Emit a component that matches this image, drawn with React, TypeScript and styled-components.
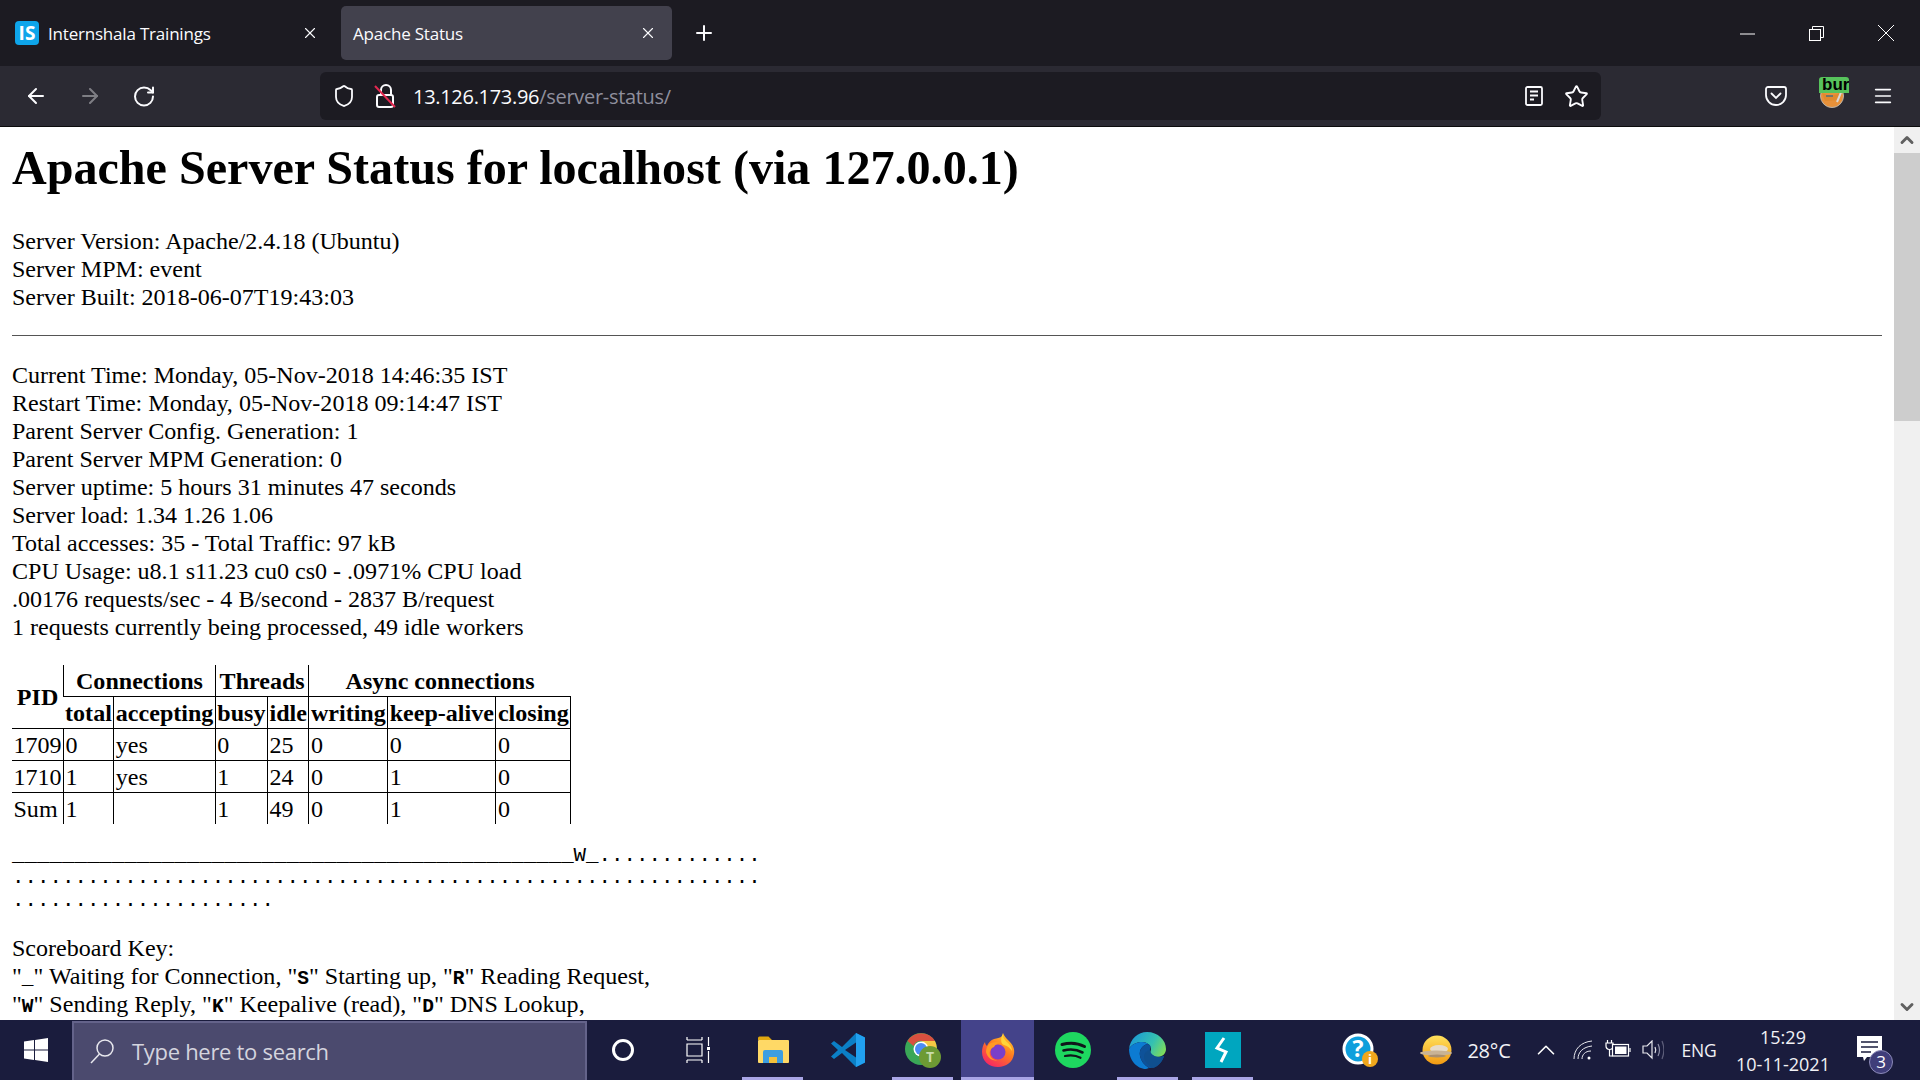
import React from "react";
import styled, { createGlobalStyle } from "styled-components";
import { ArrowLeft, ArrowRight, ChevronUp, ChevronDown, Menu, Plus, RotateCw, Shield, Star, X } from "lucide-react";

const GlobalStyle = createGlobalStyle`
  html, body {
    margin: 0;
    padding: 0;
    background: #fff;
  }
  #root {
    height: 100vh;
  }
`;

const Screen = styled.div`
  display: flex;
  flex-direction: column;
  width: 1920px;
  height: 1080px;
  overflow: hidden;
`;

/* browser chrome */
const TitleBar = styled.div`
  display: flex;
  align-items: center;
  flex: 0 0 66px;
  background: #1c1b22;
  color: #fbfbfe;
  font-family: "Open Sans", sans-serif;
`;

const Tab = styled.div<{ $active?: boolean }>`
  display: flex;
  align-items: center;
  gap: 9px;
  width: 331px;
  height: 54px;
  margin-left: ${(p) => (p.$active ? "10px" : "0")};
  padding: 0 ${(p) => (p.$active ? "15px" : "12px")} 0 ${(p) => (p.$active ? "12px" : "15px")};
  box-sizing: border-box;
  border-radius: 5px;
  background: ${(p) => (p.$active ? "#42414d" : "transparent")};
  font-size: 17px;
  letter-spacing: -0.2px;
`;

const TabLabel = styled.span`
  flex: 1;
`;

const SiteIcon = styled.div`
  display: flex;
  align-items: center;
  justify-content: center;
  width: 24px;
  height: 24px;
  border-radius: 4px;
  background: #0ea5ea;
  color: #fff;
  font-size: 19px;
  font-weight: 700;
  letter-spacing: 0;
`;

const NewTab = styled.div`
  display: flex;
  margin-left: 20px;
`;

const WindowButtons = styled.div`
  display: flex;
  align-items: center;
  margin-left: auto;
`;

const WindowButton = styled.div`
  display: flex;
  justify-content: center;
  width: 69px;
`;

const ToolBar = styled.div`
  display: flex;
  align-items: center;
  flex: 0 0 61px;
  padding-left: 24px;
  box-sizing: border-box;
  background: #2b2a33;
  border-bottom: 1px solid #0c0c0d;
  color: #fbfbfe;
`;

const NavButton = styled.div<{ $dim?: boolean }>`
  display: flex;
  justify-content: center;
  width: 24px;
  margin-right: 30px;
  opacity: ${(p) => (p.$dim ? 0.4 : 1)};
`;

const UrlBar = styled.div`
  display: flex;
  align-items: center;
  width: 1281px;
  height: 48px;
  margin-left: 134px;
  padding: 0 11px 0 12px;
  box-sizing: border-box;
  border-radius: 6px;
  background: #1c1b22;
`;

const UrlIcon = styled.div<{ $width: number }>`
  display: flex;
  flex: 0 0 ${(p) => p.$width}px;
`;

const UrlText = styled.div`
  flex: 1;
  padding-top: 1px;
  font-family: "Open Sans", sans-serif;
  font-size: 20px;
  letter-spacing: -0.3px;
  color: #fbfbfe;
`;

const UrlPath = styled.span`
  color: #8f8f9d;
`;

const ToolIcons = styled.div`
  display: flex;
  align-items: center;
  margin-left: 159px;
`;

const ToolSlot = styled.div<{ $width: number }>`
  position: relative;
  display: flex;
  justify-content: center;
  width: ${(p) => p.$width}px;
`;

const BurpBadge = styled.div`
  position: absolute;
  top: -6px;
  left: 27px;
  width: 30px;
  height: 16px;
  overflow: hidden;
  border-radius: 3px 3px 0 0;
  background: #57c35c;
  color: #000;
  font-family: "Liberation Sans", sans-serif;
  font-size: 17px;
  font-weight: 700;
  line-height: 15px;
  padding-left: 3px;
  box-sizing: border-box;
  white-space: nowrap;
`;

/* page */
const Viewport = styled.div`
  display: flex;
  flex: 1;
  min-height: 0;
  background: #fff;
`;

const Document = styled.main`
  flex: 1;
  min-width: 0;
  padding: 0 12px;
  overflow: hidden;
  color: #000;
  font-family: "Liberation Serif", "Times New Roman", serif;
  font-size: 24.05px;
  line-height: 28px;
`;

const Heading = styled.h1`
  margin: 14px 0 32px;
  font-size: 48.1px;
  line-height: 54px;
  font-weight: 700;
`;

const Line = styled.div`
  white-space: nowrap;
`;

const Rule = styled.hr`
  margin: 24px 0 25px;
  height: 1px;
  border: 0;
  background: #555;
`;

const StatusTable = styled.table`
  margin: 24px 0 21px;
  border-collapse: collapse;
  line-height: 28px;

  th, td {
    padding: 1.5px;
    height: 28px;
    border-left: 1px solid #000;
    border-bottom: 1px solid #000;
    text-align: left;
  }

  th {
    font-weight: 700;
  }

  th[colspan] {
    text-align: center;
    border-bottom: 1px solid #000;
  }

  tr > :first-child {
    border-left: 0;
  }

  tr:last-child td {
    border-bottom: 0;
  }

  tr > :last-child:not([colspan]) {
    border-right: 1px solid #000;
  }
`;

const PidHead = styled.th`
  && {
    text-align: center;
    border-left: 0;
  }
`;

const Scoreboard = styled.pre`
  margin: 0 0 22px;
  font-family: "Liberation Mono", "Courier New", monospace;
  font-size: 20.8px;
  line-height: 22.3px;
`;

const Code = styled.code`
  font-family: "Liberation Mono", "Courier New", monospace;
  font-size: 19.5px;
  font-weight: 700;
  line-height: 0;
`;

const ScrollBar = styled.div`
  display: flex;
  flex-direction: column;
  flex: 0 0 26px;
  background: #f0f0f0;
  color: #606060;
`;

const ScrollButton = styled.div`
  display: flex;
  align-items: center;
  justify-content: center;
  flex: 0 0 26px;
`;

const ScrollThumb = styled.div`
  flex: 0 0 268px;
  background: #cdcdcd;
`;

const ScrollTrack = styled.div`
  flex: 1;
`;

/* windows taskbar */
const TaskBar = styled.footer`
  display: flex;
  align-items: center;
  flex: 0 0 60px;
  background: #1a1c3d;
  color: #fff;
  font-family: "Open Sans", sans-serif;
`;

const StartButton = styled.div`
  display: flex;
  align-items: center;
  justify-content: center;
  flex: 0 0 72px;
`;

const SearchBox = styled.div`
  display: flex;
  align-items: center;
  gap: 17px;
  flex: 0 0 515px;
  height: 59px;
  margin: 1px -2px 0 0;
  padding: 0 0 2px 15px;
  box-sizing: border-box;
  background: #4b4a6e;
  border: 2px solid #64638a;
  border-bottom: 0;
  color: #d4d4de;
  font-size: 22px;
  letter-spacing: -0.3px;
`;

const TaskSlot = styled.div<{ $open?: boolean; $active?: boolean }>`
  display: flex;
  align-items: center;
  justify-content: center;
  flex: 0 0 75px;
  height: 60px;
  box-sizing: border-box;
  position: relative;
  background: ${(p) => (p.$active ? "#44438a" : "transparent")};
  background-clip: content-box;
  padding: 0 ${(p) => (p.$active ? "1px" : "0")};

  &::after {
    content: "";
    display: ${(p) => (p.$open ? "block" : "none")};
    position: absolute;
    left: ${(p) => (p.$active ? "1px" : "7px")};
    right: ${(p) => (p.$active ? "1px" : "7px")};
    bottom: 0;
    height: 3px;
    background: #a9a5e6;
  }
`;

const Tray = styled.div`
  display: flex;
  align-items: center;
  margin-left: 41px;
`;

const TraySlot = styled.div<{ $width: number }>`
  position: relative;
  display: flex;
  align-items: center;
  justify-content: center;
  flex: 0 0 ${(p) => p.$width}px;
`;

const TrayText = styled.span<{ $size: number }>`
  font-size: ${(p) => p.$size}px;
  letter-spacing: -0.2px;
  color: #f2f2f6;
`;

const Clock = styled.div`
  display: flex;
  flex-direction: column;
  align-items: center;
  gap: 5px;
  font-size: 18px;
  line-height: 22px;
  color: #f2f2f6;
`;

const NotifyBadge = styled.div`
  position: absolute;
  left: 34px;
  top: 14px;
  width: 24px;
  height: 24px;
  border-radius: 50%;
  background: #3f3d7a;
  border: 1px solid #8c8ab8;
  box-sizing: border-box;
  text-align: center;
  font-size: 17px;
  line-height: 22px;
`;

const BurpFace = () => (
  <svg width="24" height="26" viewBox="0 0 24 26">
    <circle cx="12" cy="13" r="11.500" fill="#e8913a" stroke="#b9b4ad" />
    <path d="M2 10l8 3 8-2 4-5-3 11-14 1z" fill="#e08a2e" />
    <path d="M17 19l5-12" stroke="#d8d8d8" strokeWidth="2" />
    <path d="M6 13h7" stroke="#4b6e80" strokeWidth="1.500" />
  </svg>
);

const FolderIcon = () => (
  <svg width="32" height="28" viewBox="0 0 32 28">
    <path d="M1 2a1.500 1.500 0 0 1 1.500-1.500h9L15 4h-14z" fill="#e0a70f" />
    <rect x="1" y="4" width="31" height="23" rx="1" fill="#ffd966" />
    <path d="M6 27v-11a2 2 0 0 1 2-2h16a2 2 0 0 1 2 2v11h-6v-6h-8v6z" fill="#3d9ee0" />
    <rect x="12" y="21" width="8" height="6" fill="#f4c13c" />
  </svg>
);

const VsCodeIcon = () => (
  <svg width="36" height="36" viewBox="0 0 36 36">
    <path d="M26 1l9 4.500v25L26 35 12 21l-8 6-3-2.500L8 18 1 11.500 4 9l8 6z" fill="#0b7fc6" />
    <path d="M26 1l9 4.500v25L26 35V25l-1 0V11l1 0z" fill="#21a0ef" />
    <path d="M26 10.500L15 18l11 7.500z" fill="#1a1c3d" />
  </svg>
);

const ChromeIcon = () => (
  <svg width="38" height="36" viewBox="0 0 38 36">
    <circle cx="17" cy="17" r="16" fill="#3aa757" />
    <path d="M3.500 9A16 16 0 0 1 31 9H17a8 8 0 0 0-7.500 5z" fill="#d9503f" />
    <path d="M31 9a16 16 0 0 1-8 22l-1-12a8 8 0 0 0-5-10z" fill="#f5c744" />
    <circle cx="17" cy="17" r="7.500" fill="#fff" />
    <circle cx="17" cy="17" r="6" fill="#4c8bf5" />
    <circle cx="26" cy="25" r="11" fill="#6d9a34" />
    <text x="26" y="30" textAnchor="middle" fontSize="14" fontWeight="700" fontFamily="Open Sans, sans-serif" fill="#c9dcae">T</text>
  </svg>
);

const FirefoxIcon = () => (
  <svg width="34" height="36" viewBox="0 0 34 36">
    <defs>
      <linearGradient id="ffOuter" x1="0.8" y1="0" x2="0.2" y2="1">
        <stop offset="0" stopColor="#ffd02e" />
        <stop offset="0.45" stopColor="#ff7a1f" />
        <stop offset="1" stopColor="#f5206a" />
      </linearGradient>
    </defs>
    <path d="M22 1c1 3 3 5 6 8 4 4 6 8 5 13-1 8-8 13-16 13C8 35 1 29 1 20c0-4 1-7 3-10 0 2 1 3 2 4 1-3 4-6 7-7 3-1 6-1 7-2 1-1 2-2 2-4z" fill="url(#ffOuter)" />
    <path d="M22 1c-1 5 3 8 6 11 2 2 3 5 3 7-2-3-4-5-8-6-3-1-4-5-1-12z" fill="#ffd43a" />
    <circle cx="17" cy="20" r="7.500" fill="#7a3fc8" />
    <path d="M8 12c3-2 8-3 12-1-4 0-6 2-7 4-3 1-5 4-4 8 1 3 4 6 9 5-7 2-12-3-13-8 0-3 1-6 3-8z" fill="#ff9a24" />
  </svg>
);

const SpotifyIcon = () => (
  <svg width="36" height="36" viewBox="0 0 36 36">
    <circle cx="18" cy="18" r="18" fill="#1ed760" />
    <path d="M7 12.500c7-2 16-1.500 22.500 2" stroke="#10151a" strokeWidth="3" strokeLinecap="round" fill="none" />
    <path d="M8.500 18.500c6-1.500 13.500-1 19 2" stroke="#10151a" strokeWidth="2.600" strokeLinecap="round" fill="none" />
    <path d="M10 24c5-1 11-.7 15.500 1.800" stroke="#10151a" strokeWidth="2.200" strokeLinecap="round" fill="none" />
  </svg>
);

const EdgeIcon = () => (
  <svg width="37" height="37" viewBox="0 0 37 37">
    <defs>
      <linearGradient id="edgeTop" x1="0" y1="0.3" x2="1" y2="0.7">
        <stop offset="0" stopColor="#1b9ad6" />
        <stop offset="0.6" stopColor="#35c1b0" />
        <stop offset="1" stopColor="#7fdc5a" />
      </linearGradient>
    </defs>
    <path d="M0 17C1 7 9 0 18 0c11 0 19 8 19 17 0 5-4 8-9 8-4 0-7-2-7-4 0-1 1-2 1-4 0-4-4-7-9-7-6 0-11 3-13 7z" fill="url(#edgeTop)" />
    <path d="M0 17c3-5 8-7 13-7 3 0 5 1 6 2-6 1-9 6-8 12 1 5 4 9 9 12-1 0-2 1-3 1C8 37 0 28 0 17z" fill="#0c7bd2" />
    <path d="M19 12c3 1 3 3 2 5-1 3 3 8 9 8 2 0 3-1 5-1-2 7-8 13-15 12-5-3-8-7-9-12-1-6 2-11 8-12z" fill="#0e5299" />
    <path d="M21 18c0 4 4 7 9 7 2 0 4 0 5-1-2 6-6 10-11 12l-2-1c-4-3-7-7-7-10 0-4 3-7 6-7z" fill="#0f4f8f" />
  </svg>
);

const BoltIcon = () => (
  <svg width="36" height="36" viewBox="0 0 36 36">
    <rect width="36" height="36" fill="#00a6bf" />
    <path d="M19 6l-7 10 9 4-5 10" stroke="#fff" strokeWidth="3" strokeLinejoin="miter" fill="none" />
  </svg>
);

const HelpIcon = () => (
  <svg width="36" height="40" viewBox="0 -3 36 40">
    <circle cx="16" cy="16" r="14" fill="#0f9fdc" stroke="#fff" strokeWidth="3" />
    <text x="16" y="24" textAnchor="middle" fontSize="23" fontWeight="700" fontFamily="Open Sans, sans-serif" fill="#fff">?</text>
    <circle cx="28" cy="26" r="8" fill="#f0a71c" />
    <text x="28" y="31" textAnchor="middle" fontSize="13" fontWeight="700" fontFamily="Open Sans, sans-serif" fill="#fff">i</text>
  </svg>
);

const WeatherIcon = () => (
  <svg width="36" height="30" viewBox="0 0 36 30">
    <defs>
      <linearGradient id="sun" x1="0" y1="0" x2="0" y2="1">
        <stop offset="0" stopColor="#ffe15c" />
        <stop offset="1" stopColor="#f39a12" />
      </linearGradient>
    </defs>
    <circle cx="18" cy="15" r="14.500" fill="url(#sun)" />
    <ellipse cx="20" cy="14" rx="9" ry="4" fill="#e8dcc8" />
    <ellipse cx="17" cy="18" rx="16" ry="2.500" fill="#c9b395" />
    <ellipse cx="18" cy="21" rx="9" ry="1.500" fill="#a98f70" />
  </svg>
);

const WifiIcon = () => (
  <svg width="20" height="20" viewBox="0 0 20 20" fill="none" stroke="#e8e8ee" strokeWidth="1">
    <path d="M1 19C1 9 8 2 19 1" />
    <path d="M5 19c0-7 5-12 14-13" />
    <path d="M9 19c0-4 3-8 9-8" />
    <circle cx="16" cy="18" r="1.500" fill="#fff" stroke="none" />
  </svg>
);

const BatteryIcon = () => (
  <svg width="26" height="20" viewBox="0 0 26 20" fill="none" stroke="#fff" strokeWidth="1.200">
    <path d="M2.500 0v3M6.500 0v3M1 3h7v3a3.500 3.500 0 0 1-7 0zM4.500 10v6h3" />
    <rect x="7.500" y="4.500" width="16" height="11.500" fill="#1a1c3d" />
    <rect x="10" y="6.500" width="11.500" height="7.500" fill="#fff" stroke="none" />
    <path d="M25 8v4" />
  </svg>
);

const SpeakerIcon = () => (
  <svg width="22" height="20" viewBox="0 0 22 20" fill="none" stroke="#e8e8ee" strokeWidth="1.200">
    <path d="M1 6v7h4l5 5V1L5 6z" />
    <path d="M13 7c1 2 1 4 0 6" />
    <path d="M16 4c2 4 2 8 0 12" stroke="#8f90a8" />
    <path d="M20 1c2.500 6 2.500 12 0 18" stroke="#5d5e7a" />
  </svg>
);

const LockIcon = () => (
  <svg width="22" height="26" viewBox="0 0 22 26" fill="none">
    <path d="M7 12V7a5 5 0 0 1 10 0v5" stroke="#fbfbfe" strokeWidth="2" />
    <rect x="3" y="12" width="16" height="12" rx="2" stroke="#fbfbfe" strokeWidth="2" fill="#1c1b22" />
    <path d="M1 3l20 21" stroke="#e22850" strokeWidth="2" />
  </svg>
);

const ReaderIcon = () => (
  <svg width="18" height="20" viewBox="0 0 18 20" fill="none" stroke="#fbfbfe" strokeWidth="1.800">
    <rect x="1" y="1" width="16" height="18" rx="1.500" />
    <path d="M5 5.500h8M5 9.500h8M5 13.500h4" />
  </svg>
);

const PocketIcon = () => (
  <svg width="22" height="20" viewBox="0 0 22 20" fill="none" stroke="#fbfbfe" strokeWidth="1.800">
    <path d="M1 3a2 2 0 0 1 2-2h16a2 2 0 0 1 2 2v6a10 10 0 0 1-20 0z" />
    <path d="M6.500 7.500L11 12l4.500-4.500" strokeLinecap="round" />
  </svg>
);

const RestoreIcon = () => (
  <svg width="15" height="15" viewBox="0 0 15 15" fill="none" stroke="#fff" strokeWidth="1">
    <rect x="0.500" y="3.500" width="11" height="11" />
    <path d="M3.500 3.500v-3h11v11h-3" />
  </svg>
);

const MinimizeIcon = () => (
  <svg width="15" height="15" viewBox="0 0 15 15" stroke="#fff" strokeWidth="1">
    <path d="M0 8h15" />
  </svg>
);

const CloseIcon = () => (
  <svg width="16" height="16" viewBox="0 0 16 16" stroke="#fff" strokeWidth="1">
    <path d="M0 0l16 16M16 0L0 16" />
  </svg>
);

const WindowsIcon = () => (
  <svg width="24" height="24" viewBox="0 0 24 24" fill="#fff">
    <path d="M0 3.500l10-1.400v9.400H0zM11 2l13-2v11.500H11zM0 12.500h10v9.400L0 20.500zM11 12.500h13V24l-13-2z" />
  </svg>
);

const SearchIcon = () => (
  <svg width="26" height="26" viewBox="0 0 26 26" fill="none" stroke="#e8e8ee" strokeWidth="1.500">
    <circle cx="16" cy="10" r="8" />
    <path d="M10.500 16L2 25" />
  </svg>
);

const CortanaIcon = () => (
  <svg width="24" height="24" viewBox="0 0 24 24" fill="none" stroke="#fff" strokeWidth="3">
    <circle cx="12" cy="12" r="9.500" />
  </svg>
);

const TaskViewIcon = () => (
  <svg width="24" height="26" viewBox="0 0 24 26" fill="none" stroke="#fff" strokeWidth="1.200">
    <path d="M1 3h15M1 3V0M16 3V0M1 7h15v12H1zM1 23h15M1 23v3M16 23v3M22.500 0v9M22.500 14v12" />
    <rect x="21" y="10" width="3" height="3" fill="#fff" stroke="none" />
  </svg>
);

const NotifyIcon = () => (
  <svg width="26" height="28" viewBox="0 0 26 28">
    <path d="M0 0h25v21H10l-3 4-1-4H0z" fill="#fff" />
    <path d="M4 6h17M4 11h17M4 16h10" stroke="#1a1c3d" strokeWidth="1.400" />
  </svg>
);

const rows = [
  ["1709", "0", "yes", "0", "25", "0", "0", "0"],
  ["1710", "1", "yes", "1", "24", "0", "1", "0"],
  ["Sum", "1", "", "1", "49", "0", "1", "0"],
];

const scoreboard = [
  "_".repeat(45) + "W_" + ".".repeat(13),
  ".".repeat(60),
  ".".repeat(21),
].join("\n");

export default function App() {
  return (
    <Screen>
      <GlobalStyle />
      <TitleBar>
        <Tab>
          <SiteIcon>IS</SiteIcon>
          <TabLabel>Internshala Trainings</TabLabel>
          <X size={18} strokeWidth={1.5} />
        </Tab>
        <Tab $active>
          <TabLabel>Apache Status</TabLabel>
          <X size={18} strokeWidth={1.5} />
        </Tab>
        <NewTab>
          <Plus size={24} strokeWidth={2} />
        </NewTab>
        <WindowButtons>
          <WindowButton><MinimizeIcon /></WindowButton>
          <WindowButton><RestoreIcon /></WindowButton>
          <WindowButton><CloseIcon /></WindowButton>
        </WindowButtons>
      </TitleBar>

      <ToolBar>
        <NavButton><ArrowLeft size={26} strokeWidth={2} /></NavButton>
        <NavButton $dim><ArrowRight size={26} strokeWidth={2} /></NavButton>
        <NavButton><RotateCw size={25} strokeWidth={2} /></NavButton>
        <UrlBar>
          <UrlIcon $width={42}><Shield size={24} strokeWidth={1.8} /></UrlIcon>
          <UrlIcon $width={39}><LockIcon /></UrlIcon>
          <UrlText>13.126.173.96<UrlPath>/server-status/</UrlPath></UrlText>
          <UrlIcon $width={39}><ReaderIcon /></UrlIcon>
          <UrlIcon $width={26}><Star size={25} strokeWidth={1.8} /></UrlIcon>
        </UrlBar>
        <ToolIcons>
          <ToolSlot $width={32}><PocketIcon /></ToolSlot>
          <ToolSlot $width={80}>
            <BurpFace />
            <BurpBadge>burp</BurpBadge>
          </ToolSlot>
          <ToolSlot $width={22}><Menu size={24} strokeWidth={1.8} /></ToolSlot>
        </ToolIcons>
      </ToolBar>

      <Viewport>
        <Document>
          <Heading>Apache Server Status for localhost (via 127.0.0.1)</Heading>
          <Line>Server Version: Apache/2.4.18 (Ubuntu)</Line>
          <Line>Server MPM: event</Line>
          <Line>Server Built: 2018-06-07T19:43:03</Line>
          <Rule />
          <Line>Current Time: Monday, 05-Nov-2018 14:46:35 IST</Line>
          <Line>Restart Time: Monday, 05-Nov-2018 09:14:47 IST</Line>
          <Line>Parent Server Config. Generation: 1</Line>
          <Line>Parent Server MPM Generation: 0</Line>
          <Line>Server uptime: 5 hours 31 minutes 47 seconds</Line>
          <Line>Server load: 1.34 1.26 1.06</Line>
          <Line>Total accesses: 35 - Total Traffic: 97 kB</Line>
          <Line>CPU Usage: u8.1 s11.23 cu0 cs0 - .0971% CPU load</Line>
          <Line>.00176 requests/sec - 4 B/second - 2837 B/request</Line>
          <Line>1 requests currently being processed, 49 idle workers</Line>
          <StatusTable>
            <thead>
              <tr>
                <PidHead rowSpan={2}>PID</PidHead>
                <th colSpan={2}>Connections</th>
                <th colSpan={2}>Threads</th>
                <th colSpan={3}>Async connections</th>
              </tr>
              <tr>
                <th>total</th>
                <th>accepting</th>
                <th>busy</th>
                <th>idle</th>
                <th>writing</th>
                <th>keep-alive</th>
                <th>closing</th>
              </tr>
            </thead>
            <tbody>
              {rows.map((row) => (
                <tr key={row[0]}>
                  {row.map((cell, i) => (
                    <td key={i}>{cell}</td>
                  ))}
                </tr>
              ))}
            </tbody>
          </StatusTable>
          <Scoreboard>{scoreboard}</Scoreboard>
          <Line>Scoreboard Key:</Line>
          <Line>"<Code>_</Code>" Waiting for Connection, "<Code>S</Code>" Starting up, "<Code>R</Code>" Reading Request,</Line>
          <Line>"<Code>W</Code>" Sending Reply, "<Code>K</Code>" Keepalive (read), "<Code>D</Code>" DNS Lookup,</Line>
        </Document>
        <ScrollBar>
          <ScrollButton><ChevronUp size={20} strokeWidth={3.5} /></ScrollButton>
          <ScrollThumb />
          <ScrollTrack />
          <ScrollButton><ChevronDown size={20} strokeWidth={3.5} /></ScrollButton>
        </ScrollBar>
      </Viewport>

      <TaskBar>
        <StartButton><WindowsIcon /></StartButton>
        <SearchBox>
          <SearchIcon />
          <span>Type here to search</span>
        </SearchBox>
        <TaskSlot><CortanaIcon /></TaskSlot>
        <TaskSlot><TaskViewIcon /></TaskSlot>
        <TaskSlot $open><FolderIcon /></TaskSlot>
        <TaskSlot><VsCodeIcon /></TaskSlot>
        <TaskSlot $open><ChromeIcon /></TaskSlot>
        <TaskSlot $open $active><FirefoxIcon /></TaskSlot>
        <TaskSlot><SpotifyIcon /></TaskSlot>
        <TaskSlot $open><EdgeIcon /></TaskSlot>
        <TaskSlot $open><BoltIcon /></TaskSlot>
        <Tray>
          <TraySlot $width={118}><HelpIcon /></TraySlot>
          <TraySlot $width={36}><WeatherIcon /></TraySlot>
          <TraySlot $width={68}><TrayText $size={20}>28°C</TrayText></TraySlot>
          <TraySlot $width={46}><ChevronUp size={30} strokeWidth={1.3} /></TraySlot>
          <TraySlot $width={28}><WifiIcon /></TraySlot>
          <TraySlot $width={42}><BatteryIcon /></TraySlot>
          <TraySlot $width={28}><SpeakerIcon /></TraySlot>
          <TraySlot $width={64}><TrayText $size={17.5}>ENG</TrayText></TraySlot>
          <TraySlot $width={104}>
            <Clock>
              <span>15:29</span>
              <span>10-11-2021</span>
            </Clock>
          </TraySlot>
          <TraySlot $width={70}>
            <NotifyIcon />
            <NotifyBadge>3</NotifyBadge>
          </TraySlot>
        </Tray>
      </TaskBar>
    </Screen>
  );
}
